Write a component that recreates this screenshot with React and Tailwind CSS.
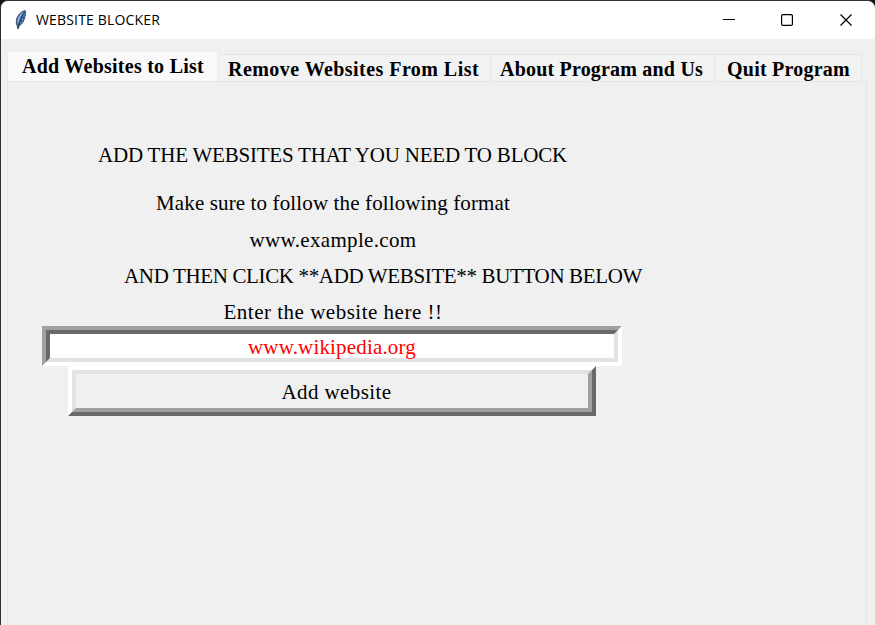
import { useLayoutEffect, useRef, useState } from "react";

// Text whose tracking is adjusted so that the line fills the given width.
function Fit({ children, width, className = "" }) {
  const ref = useRef(null);
  const [spacing, setSpacing] = useState(0);
  useLayoutEffect(() => {
    const natural = ref.current.getBoundingClientRect().width;
    setSpacing((width - natural) / children.length);
  }, []);
  return (
    <span ref={ref} className={`inline-block whitespace-pre ${className}`} style={{ letterSpacing: `${spacing}px` }}>
      {children}
    </span>
  );
}

function Feather() {
  return (
    <svg className="h-5 w-3" viewBox="0 0 12 20">
      <path d="M10.3 .7C7 1 3.5 4 2 8c-1 3-.9 5.500.1 7.500L3 19l.8-3C7 14.500 9 11 10 6.500c.5-2.200.7-4.500.3-5.800Z" fill="#4c86c6" stroke="#414750" strokeWidth="1" />
      <path d="M9.500 2C7.500 5 5 10 3.200 18" fill="none" stroke="#18283c" strokeWidth="1" />
      <path d="M8 2.700C5.500 4.800 3.500 8 3 12" fill="none" stroke="#a9cbe8" strokeWidth="1" />
      <path d="m7.500 7 1.300.6M5.500 10.500l1.800.8" fill="none" stroke="#18283c" />
    </svg>
  );
}

const tabs = [
  { label: "Remove Websites From List", width: 251, cls: "w-[273px] pl-[10px]" },
  { label: "About Program and Us", width: 203, cls: "w-[224px] pl-[9px]" },
  { label: "Quit Program", width: 123, cls: "w-[147px] pl-[12px]" },
];

export default function App() {
  return (
    <div className="h-[625px] w-[875px] overflow-hidden bg-[#17171b]">
      <div className="flex h-full flex-col overflow-hidden rounded-t-[8px] border-t border-l border-[#302d31] bg-[#f0f0f0] text-black">
        <header className="flex h-[38px] shrink-0 items-center bg-white pl-[14px] font-['Open_Sans',sans-serif] text-[14px]">
          <Feather />
          <Fit width={124} className="-mt-[2px] ml-[9px]">WEBSITE BLOCKER</Fit>
          <svg className="ml-auto mr-[23px] h-[14px] w-[132px]" viewBox="0 0 132 14" fill="none" stroke="#000" strokeWidth="1">
            <path d="M3 6.500h12" />
            <rect x="61.600" y="1.600" width="10.800" height="10.800" rx="1.200" strokeWidth="1.200" />
            <path d="m120.500 1.500 11 11m0-11-11 11" strokeWidth="1.200" />
          </svg>
        </header>
        <nav className="ml-[6px] mt-[12px] flex h-[31px] shrink-0 items-end font-['Liberation_Serif',serif] text-[20px] font-bold leading-[28px]">
          <div className="h-[31px] w-[211px] border border-b-0 border-[#ececec] bg-[#f9f9f9] pl-[14px]">
            <Fit width={182}>Add Websites to List</Fit>
          </div>
          {tabs.map((t) => (
            <div key={t.label} className={`h-[28px] border-t border-r border-[#e6e6e6] bg-[#f2f2f2] ${t.cls}`}>
              <Fit width={t.width}>{t.label}</Fit>
            </div>
          ))}
        </nav>
        <main className="-mt-px ml-[6px] mr-[8px] flex-1 border border-b-0 border-[#e7e7e7] pl-[34px] font-['Liberation_Serif',serif] text-[21px] leading-[36px]">
          <div className="flex w-[580px] flex-col items-center pt-[55px]">
            <Fit width={469} className="ml-px">ADD THE WEBSITES THAT YOU NEED TO BLOCK</Fit>
            <Fit width={354} className="ml-[2px] mt-[12px]">Make sure to follow the following format</Fit>
            <Fit width={167} className="mt-px ml-[2px]">www.example.com</Fit>
            <Fit width={518} className="ml-[102px]">AND THEN CLICK **ADD WEBSITE** BUTTON BELOW</Fit>
            <Fit width={219} className="ml-[2px]">Enter the website here !!</Fit>
          </div>
          <div className="-mt-[4px] h-[40px] w-[580px] border-4 border-t-[#a0a0a0] border-r-white border-b-white border-l-[#a0a0a0]">
            <div className="flex h-full items-center justify-center border-4 border-t-[#696969] border-r-[#e3e3e3] border-b-[#e3e3e3] border-l-[#696969] bg-white pt-[2px] text-[#ff0000]">
              <Fit width={168}>www.wikipedia.org</Fit>
            </div>
          </div>
          <button className="ml-[26px] block h-[50px] w-[528px] border-4 border-t-white border-r-[#696969] border-b-[#696969] border-l-white">
            <span className="flex h-full items-center justify-center border-4 border-t-[#e3e3e3] border-r-[#a0a0a0] border-b-[#a0a0a0] border-l-[#e3e3e3] pt-px pl-[9px]">
              <Fit width={110}>Add website</Fit>
            </span>
          </button>
        </main>
      </div>
    </div>
  );
}
